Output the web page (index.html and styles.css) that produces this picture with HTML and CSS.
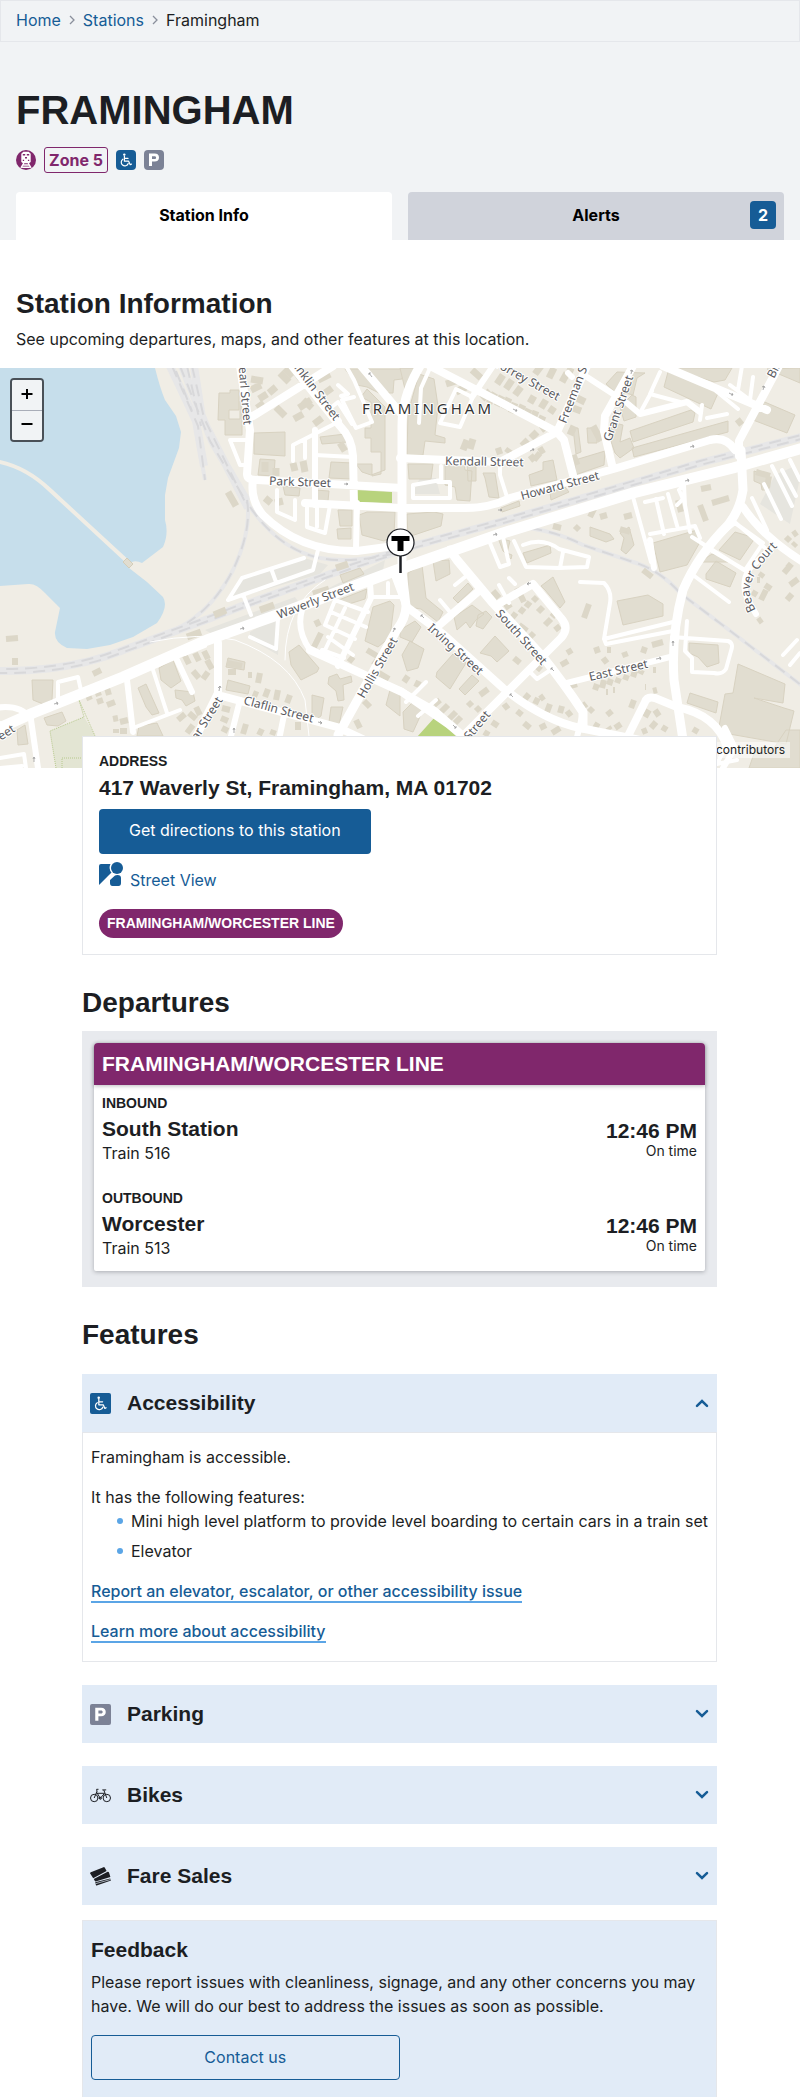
FILE: index.html
```html
<!DOCTYPE html>
<html lang="en">
<head>
<meta charset="utf-8">
<meta name="viewport" content="width=device-width, initial-scale=1">
<title>Framingham | Station</title>
<link rel="stylesheet" href="styles.css">
</head>
<body>
<svg class="sprite" width="0" height="0" aria-hidden="true">
  <symbol id="wheelchair" viewBox="0 0 20 20">
    <g fill="none" stroke="#fff" stroke-width="1.2" stroke-linecap="round" stroke-linejoin="round">
      <path d="M8.4 6v5.2h4.2l1.6 3.5 1.2-.6M8.4 8.4h3.6"/>
      <path d="M6.900 9.200a3.600 3.600 0 1 0 5.300 4.300"/>
    </g>
    <circle cx="8.300" cy="4.600" r="1.200" fill="#fff"/>
  </symbol>
  <symbol id="parking" viewBox="0 0 20 20">
    <path fill="#fff" fill-rule="evenodd" d="M5 3.6h5.6c2.9 0 4.4 1.6 4.4 4s-1.500 4-4.400 4H8V16H5zM8 6.200v2.900h2.400c1.200 0 1.700-.6 1.700-1.450s-.5-1.450-1.700-1.450z"/>
  </symbol>
  <symbol id="chevron" viewBox="0 0 14 10">
    <path d="M2 2.200l5 4.800 5-4.800" fill="none" stroke="#165c96" stroke-width="2.500" stroke-linecap="round"/>
  </symbol>
</svg>

<nav class="breadcrumb" aria-label="Breadcrumb">
  <a href="#">Home</a>
  <svg class="crumb-sep" viewBox="0 0 6 10" aria-hidden="true"><path d="M1 1l4 4-4 4"/></svg>
  <a href="#">Stations</a>
  <svg class="crumb-sep" viewBox="0 0 6 10" aria-hidden="true"><path d="M1 1l4 4-4 4"/></svg>
  <span>Framingham</span>
</nav>

<header class="station-header">
  <h1>FRAMINGHAM</h1>
  <div class="station-tags">
    <svg class="tag-icon" viewBox="0 0 20 20" role="img" aria-label="Commuter Rail">
      <circle cx="10" cy="10" r="10" fill="#80276c"/>
      <path fill="#fff" d="M7.300 1.800h5.400l2 2V12L13 13.300H7L5.300 12V3.800z"/>
      <path fill="#80276c" d="M6.800 4h2.400v1.600H6.800zM10.800 4h2.400v1.600h-2.400zM9 7h2v1.500H9zM6.800 9.800h1.300v1.300H6.800zM11.900 9.800h1.300v1.300h-1.300z"/>
      <path fill="none" stroke="#fff" stroke-width="1.400" d="M7.800 13l-2.800 4.800M12.200 13l2.800 4.800M7 15h6M6.200 17.300h7.600"/>
    </svg>
    <span class="zone">Zone 5</span>
    <svg class="tag-icon tag-access" role="img" aria-label="Accessible"><use href="#wheelchair"/></svg>
    <svg class="tag-icon tag-parking" role="img" aria-label="Parking"><use href="#parking"/></svg>
  </div>
  <div class="tabs">
    <a class="tab tab-active" href="#">Station Info</a>
    <a class="tab" href="#">Alerts <span class="count">2</span></a>
  </div>
</header>

<main>
  <section class="intro">
    <h2>Station Information</h2>
    <p>See upcoming departures, maps, and other features at this location.</p>
  </section>

  <div class="map">
    <svg class="map-canvas" viewBox="0 368 800 400" preserveAspectRatio="xMidYMid slice" role="img" aria-label="Map of the streets around Framingham station">
      <defs>
        <g id="houses">
          <path stroke-width="7" d="M251 379l12 2M251 390l10-5M259 399l8-5M269 393l7-6M280 373l9 9M285 368l8 8M295 371l6 8M276 407l9 9M257 408l7-5M294 419l9-5M303 400l9 8M325 393l7-5M318 380l12-6M322 418l-8 6M299 408l12-8M446 384l10-3M456 392l10-5M472 370l9 8M482 399l8-8M489 403l6-10M497 406l5-10M504 409l5-11M511 413l4-10M518 415l5-10M525 418l4-9M532 421l4-10M539 425l4-9M497 384l6-9M506 389l6-9M515 395l6-8M530 403l4-7M541 408l5-8M550 413l4-6M535 374l6-8M549 378l5-10M562 382l5-9M577 398l8 4M573 408l8 3M568 376l3-8M570 435l4-9M573 455l4 10M463 450l4-10M470 449l3-10M496 452l6-2M507 453l3-4M522 446l6-6M531 438l6-6M541 430l4-3M530 460l5-4M539 452l5-3M593 426l8 15M737 424l5-4M265 462v10M276 468v8M293 463l2 8M303 461l2 11M228 492l8 14M340 443l5 8M265 498l6 5M275 503l8-2M313 594l16-5M214 615l12-5M260 610l14-5M187 637l14-5M336 568l12-4"/>
          <path stroke-width="6" d="M93 674l8-4M87 693l3 7M97 690l2 6M107 688l2 7M97 702l6-2M107 705l8-3M113 719l5-1M120 722l8-2M116 733v-4M120 731h7M185 656l4 8M195 653l4 8M204 651l4 8M207 660l5 9M193 671l6 7M203 679l5-7M178 720l7-6M187 733l6-8M189 713l7 6M200 715l-4-8M227 663l15 3M228 672h8M248 675h4M258 683l2-10M253 693l5 2M265 697l3-8M276 700l2-10M287 703l3-8M222 708l8 2M221 718l7 3M222 728l6 3M246 724l-3 10M262 729l-3 6M274 730l-2 5M298 722v8M316 620l3 6M314 647l7-14M364 701l6 6M356 720l4 8M349 662l4-5M367 650l10 6M373 661l8 6M379 673l10 6M493 591l6 7M505 608l6-4M517 588l7 14M512 618l4-5M520 613l4-5M526 607l4-5M533 601l4-4M538 612l5-5M519 625l8 6M530 637l4-4M514 658l6 5M535 665l6 5M545 625l6-6M552 617l5-6M555 630l5-4M561 665l7-4M567 653l5-3M596 647l2 6M603 658l4 5M607 650h4M624 652l2 5M643 653l2-6M652 645l11-3M595 690l2-6M602 688l2-8M609 685l2-6M617 683l2-5M625 680l2-5M633 677l2-6M640 674l2-4M653 670h3M645 687h1M606 692h2M613 690h2M653 691l4-1M570 686l7-2M524 700l5-6M535 704l3-6M550 704l-3 8M560 713l2-7M571 716l-4-5M582 703l4 5M589 712l4-4M607 715l5-4M615 728l6-4M608 727l2 3M594 724l5 3M631 708l3-8M655 710l4 6M645 717l4-7M651 728l5-6M662 727l5 3M642 732l5-2M694 733l3-5M540 699l4-3M517 711l5 4M524 723l6 5M540 728l6-3M552 733l8-5M492 722l6 4M504 704l4 5M484 732l5 3M448 720l8-8M455 723l6-6M434 705l6-5M441 712l7-7M468 702l4 4M476 707l4 4M480 695l8-6M404 682l4-6M416 687l3-6M590 517l4-8M600 517l7-2M553 526l8 2M575 530l4-4M624 517l8-2M620 529l10 3M701 489l10-2M712 503l17-5M700 505l6 16M678 500l3 12M761 600l5-10M760 577l3-4M765 585l6 4M752 592l5 3M784 573l5-6M787 600l5-6M757 580h3M758 622l4-3M790 585l8-6M787 564l5 4M786 541l4-4M793 546l3-3M793 535l4-3M643 570l9 7M584 618l5-14M770 476l-14-4M767 488l2-12M534 460l6-7M15 658v7M6 639l12-1"/>
        </g>
        <g id="blocks">
          <path d="M219 393h11v-3h9v20h-10v9h11v-18h2v34h-17v-15h-7zM254 433l31-1v24l-31-2zM260 459l15 1-1 16-16-1zM331 462l22 1-1 16-23-1zM320 437l25-3 3 8-26 2zM356 464h16v12l9-2v-22h-10v-14h-6v-10h6v-26l-10-5 6-8 18 18v63l-14 5-9-3zM357 385l-12-16h60l-3 10-8 1-1 13h-14l-12-6zM315 490l14 1-1 10-11-1zM283 486l17 2-1 8-14-1zM338 510h14v16h-12zM337 529l14-1v11h-13zM359 515l8-3h28l-1 23-10 6-22-6zM373 607l17-6 4 4-4 32-12 10-13-6zM289 652l10-7 20 23-2 4-16 8-10-15zM312 695l12 3-3 18-9 6zM331 707h12l-4 18-10-3zM340 575l20-7 4 6-21 9zM336 601l31-12-2 10-16 5zM32 680h21l-1 20-9 4-10-4zM44 718l18-6 4 9-8 5-11-1zM17 730l8-5 3 19-10 1zM228 658l17 4-1 8-18-3zM228 680l22 6-2 8-22-4zM159 668l14-8 8 21-10 7-10-8zM138 688l8-4 13 29-7 2-6-8zM175 690l18 2 2 9-9 5-4-6-6-2zM139 726l18-3 6 13h-26zM329 677l8-3 3 5 11-3 1 6-9 3 1 15-6 1-2-10-8-7zM390 690h10v26l-14-11z"/>
          <path d="M400 368h22l-14 28v6zM419 374l15 5 4 27-3 29 10 3v5l-20-2-2 14h-16l1-42zM408 464h25l-2 15h-22zM445 462h19l1 8 7 1-2 30-13-1-2-13-10-2zM467 461h9v20h-8zM483 473h12l4 25-10-1-4-19zM529 475l14-5v-8l10-2 4 20-26 6zM550 493l15-6 4 5-18 8zM501 508l18-7 1 5-18 6zM407 514l27-2 9 2-2 12-33 11zM575 460l30-9-1 14-29 10zM573 428h5l3 24-5 2zM587 428h10v15h-9zM607 430l12-6 4 1-3 17 10-4 4 10-14 10-5-5zM608 406l7-14-9-8 11-12 28 1-8 5-4 17-8-2zM620 407l12-12 4 2v20l-12 4zM630 431l61-21 4 3-2 9-60 20zM632 448l96-27v11l-94 25zM668 372l51 19-8 18-47-22zM670 368h62l-7 12-11 2zM767 369l33-1v15zM760 400l35 15-8 18-34-13zM653 543l44-13 3 12-13 23-27 7zM620 533l9-6 5 18-8 9-5-4 3-12zM590 527l20 7 4 5-8 3-16-6zM523 553l27-8 1 8-24 10zM498 538l12 3-3 12 5 2-1 4-8-8zM735 532l20 6-15 22-21-10zM754 471l14 5v14h-6l-1-6-7-3zM408 573l14-8 4 33 17 14-5 10-17-13-13-2zM433 561l16-1 1 14-14 7zM453 598l15-15 5 6-15 14zM454 617l18-12 12 9-8 6-6 8-4-6-9 8zM478 615l8-4 6 6-9 12-7-3zM480 653l15-17 14 15-12 11-6-6zM437 672l16-18 13 9-16 26-14-12zM459 689l13-14 7 6-14 14zM400 630l15-9 6 6-9 15-12-5zM402 655l8-14 14 8-6 19-11 3zM617 601l31-6 15 9v12l-40 9zM541 586l12-9 12 25-5 6-15-18zM689 643l29 2 1 18-12 4-9-10-9-4zM690 693l28 9-2 11-29-10zM738 664l47 20-2 19-29-5 30 10 10 3-8 33-68-12 7-38 8-1zM706 574l10-13 20 12-6 14-24-8zM700 562l28 0-4-5-12-3zM403 712l12-12 8 10-10 22-9-3zM786 730h14v38h-51l7-20h18z"/>
        </g>
        <path id="beaver" d="M756 610Q747 594 751 583Q757 566 784 540"/>
      </defs>

      <rect x="-400" y="168" width="1600" height="800" fill="#f0ede5"/>
      <path fill="#c6deeb" d="M0 368H155Q160 388 165 400L176 416 181 432 179 448 168 478 165 495V520Q169 534 163 547L142 563Q136 560 132 562L129 568 147 582 163 597Q169 607 157 623L133 637 110 645 87 649 67 648Q54 642 55 632L60 608 45 593Q36 583 28 584L0 586z"/>
      <path d="M-5 461Q25 466 50 490L128 562" fill="none" stroke="#f0ede5" stroke-width="4"/>
      <path d="M123 562l4-4 6 6-4 4z" fill="#e1ddd0" stroke="#d3cdb9"/>
      <path fill="#e3e5d3" d="M50 731l34-14 11 18v33H56z"/>
      <path d="M56 768L50 731l34-14-5-17 16 36M62 768v-10h22" fill="none" stroke="#b6c98c" stroke-dasharray="1 1"/>
      <path fill="#b8d37d" d="M356 490l36 2v11l-36-1zM435 717l22 20h-40z"/>
      <path fill="#e6e5df" d="M228 598l14-20 62-20 24 7-8 9-88 25zM205 630l90-33 6 8-83 32zM250 632l30-17-2 40-28-16zM325 590l60-30-3 15-50 18zM420 478h16l4 16h-28zM775 475l20-9 5 12-10 46-30-20z"/>

      <g fill="none" stroke="#e7e7e8" stroke-width="8">
        <path d="M170 366l26 55 8 45M182 366l30 75 35 60M194 366l8 52 46 90"/>
        <path d="M-5 671Q60 672 110 655L200 622 250 603 350 567 417 545 500 522 600 493 700 463 805 436"/>
      </g>
      <g fill="none" stroke="#e7e7e8" stroke-width="4">
        <path d="M196 430l9 50M247 500Q252 530 233 570Q215 605 187 623Q160 640 140 645M250 507Q280 550 320 558Q350 564 397 553M530 528Q560 533 583 545L633 562Q660 570 680 593L733 633 805 688"/>
      </g>
      <g fill="none" stroke="#d8d8da" stroke-width="2" stroke-dasharray="12 7">
        <path d="M172 366l26 60 7 54M180 366l30 75 37 62M192 366l12 52 43 88M187 366l14 60M176 371l16 40"/>
        <path d="M-5 673Q60 674 110 657L200 624 250 605 350 569 417 547 500 524 600 495 700 465 805 438"/>
        <path stroke-dashoffset="8" d="M-5 669Q60 670 110 653L200 620 250 601 350 565 417 543 500 520 600 491 700 461 805 434"/>
        <path d="M247 500Q252 530 233 570Q215 605 187 623M250 507Q280 550 320 558Q350 564 397 553M530 528Q560 533 583 545L633 562Q660 570 680 593L733 633 805 688"/>
      </g>

      <use href="#blocks" fill="#e1ddd0" stroke="#d8d2c1"/>
      <use href="#houses" fill="none" stroke="#dcd7c8"/>
      <g class="map-roads">
        <g class="minor">
          <path stroke-width="1" d="M150 642Q200 632 235 640 290 660 305 700L309 736M325 580Q285 605 285 660"/>
          <path stroke-width="4" d="M247 440h-17l10 25h8M293 461v-16l47-24-13-18M305 440v18M315 455l38 2M338 385l10 9-7 2M346 366l8 14 18 42-16 6-14-28 12-3M328 410l10-8 14 22M277 490v22l18 8V500M307 505v22l18 6 5-28M317 507v20M228 600l14-22 62-20M228 600l85-30 5-20M272 571l4 11M244 597l7 18M58 700V682l20-5 4 18M153 670l14 43M180 710l-47 18M0 723l10 5M0 758l24-4 2 14M0 768l22-2M250 637l26 12 2-30M335 600l33 12M335 600l-10 25 30 14M331 612l35 15M328 637l25 18M322 650l22 8M345 608l-20 42M388 595v-12M400 597l-30 0M430 368l-9 20-2 35M472 397l-16-8-16 34 20 4 12-28M441 466v14l-28 5v13h37v-16h-12M500 465v10l7 22M490 543l10 24 9-3-6-27M514 541l12 26 34 1 3-16M523 545q20-8 36 4l30 8-2 10-30 1M633 497l18 65M645 502l18-4M656 499l8 35M668 494l10 35M679 490l4 9-6 6M679 490l5-5 1 20 5 27M650 534l45-8 5 12M580 582l24 1q8 8 6 20l-6 36 69-17M604 639l2 5 67-13M672 637l56 4q6 2 3 10l-5 18q-4 6-12 4l-22-1v-14l-7-7 2-30M693 575l36 27M692 537l52 33M705 547l30-24 28 20-18 27-38-22M730 518l35 30M752 498l15 32M764 484l17 35M772 466l20 40M782 470l14 26M790 460l10 20M660 372l-10 22 30 8M640 413l12-22M707 418l20-4M700 420l2-15M730 385l20 15 3-23M742 366l-4 24M716 391l22 18M406 702l20-20M418 716l18-16M455 585l10-8M440 600l10 12M499 585l10 18M509 578l6 6M783 655l14-15M790 665l10-12M528 670l9 9 12-8M725 748l-8 16 20-4M205 646l-20 8"/>
        </g>
        <g class="major">
          <path stroke-width="6" d="M315 430v75M357 503l-1 47M302 610q-6 20 8 40M370 583l1 15-33 68M127 680l6 52M177 660l15 32M240 700l-9 36M284 715l-4 20M30 713l8 55M-5 708q25-4 35 10M493 366l-21 31M572 377l-4-4M587 377l40 26 13 11 47-12 13 10M650 540l4 28M774 545l-24 23q-10 15-2 32l8 14M725 728l10 20-12 20M567 683l103-26M577 737l6-24M400 690l35 20 25 22"/>
          <path stroke-width="8" d="M333 366l-80 50M305 503l95 5M387 547l-30 4Q300 552 263 515 250 500 253 480M240 366l10 64-3 44q0 6 10 6l145 8M292 366l48 60q12 12 13 30l1 48M218 643v50l-22 44M218 695l119 32 30 14M310 650l92 42 46 32 20 16M361 366l42 50M430 366l70 36 57 30-57 30-53 -2-47-2M587 366l-30 66 7 8 9 35M633 366l-28 50-1 15 9 38M400 508h65q25 0 45-10L617 468 710 440q16-4 25 10M663 366l90 38 14 6M779 366l-40 75v15M743 507q20 30 60 55M480 590l-43 37M500 603l33-19 28 34q9 10 0 20L463 736M407 607l-12-32M407 607l36 27 60 54q40 32 77 40l60 12M627 738l18-36q2-6 10-4l22 9q40 8 50 40"/>
          <path stroke-width="9" d="M420 366q-18 30-18 60v145l4 35q0 12-10 25L338 735M450 550l7 10 36 43 50 54q20 25 40 55v16M741 450l2 40q-3 20-15 35-30 30-45 65-12 45-9 90l9 60"/>
          <path stroke-width="11" d="M-5 730l38-17 90-36 84-37 70-25 120-45 106-37 130-40 100-25 70-20"/>
        </g>
      </g>

      <g fill="none" stroke="#999" stroke-width=".8">
        <path id="oneway" d="M54 704l4-1m-2-1l2 1-1 2M240 629l4-1m-2-1l2 1-1 2M493 535l4-1m-2-1l2 1-1 2M685 481l4-1m-2-1l2 1-1 2M690 447l4-1m-2-1l2 1-1 2M498 510h4m-2-1l2 1-2 1M344 484h4m-2-1l2 1-2 1M513 409l4 2m-1-2l1 2h-2M530 451l4-2m-2 0h2l-1 2M729 393l4 2m-1-2l1 2h-2M763 390l1-4m-2 1l2-1 1 2M631 374l1-4m-2 1l2-1 1 2M656 659l5-1m-2-1l2 1-1 2M673 646v-5m-1 2l1-2 1 2M527 584l4-1m-2-1l-2 2 2 1M424 618l-3-3m0 2v-2h2M554 671l-3-3m0 2v-2h2M513 697l-3-3m0 2v-2h2M453 725l3 3m0-2v2h-2M219 691l1-5m-2 2l2-2 1 2M234 733v-5m-1 2l1-2 1 2M318 722l4 1m-2-2l2 2-2 1M34 762v-5m-1 2l1-2 1 2M393 632l2-4m-2 1l2-1v2M372 377l-3-4m0 2v-2h2"/>
      </g>

      <g class="map-labels">
        <text transform="translate(238 360) rotate(85)">Pearl Street</text>
        <text transform="translate(285 356) rotate(53)">Franklin Street</text>
        <text transform="translate(269 485) rotate(2)">Park Street</text>
        <text transform="translate(445 465) rotate(1)">Kendall Street</text>
        <text transform="translate(522 500) rotate(-15)">Howard Street</text>
        <text transform="translate(494 366) rotate(29)">Torrey Street</text>
        <text transform="translate(566 424) rotate(-69)">Freeman Street</text>
        <text transform="translate(611 442) rotate(-71)">Grant Street</text>
        <text transform="translate(774 379) rotate(-63)">Bishop Street</text>
        <text transform="translate(279 619) rotate(-21)">Waverly Street</text>
        <text transform="translate(364 699) rotate(-60)">Hollis Street</text>
        <text transform="translate(243 704) rotate(15)">Claflin Street</text>
        <text transform="translate(223 700) rotate(-58)" text-anchor="end">Cedar Street</text>
        <text transform="translate(16 731) rotate(-33)" text-anchor="end">Street</text>
        <text transform="translate(427 629) rotate(42)">Irving Street</text>
        <text transform="translate(495 614) rotate(48)">South Street</text>
        <text transform="translate(590 681) rotate(-13)">East Street</text>
        <text transform="translate(491 715) rotate(-50)" text-anchor="end">Street</text>
        <text><textPath href="#beaver">Beaver Court</textPath></text>
        <text class="place" x="362" y="414">FRAMINGHAM</text>
      </g>

      <path d="M400.500 556v17" stroke="#1c1e23" stroke-width="2.500"/>
      <circle cx="400.500" cy="542.500" r="13.500" fill="#fff" stroke="#1c1e23" stroke-width="1.200"/>
      <path d="M391.500 536h18v5h-6v10h-6v-10h-6z" fill="#000"/>
    </svg>
    <div class="zoom">
      <button type="button" aria-label="Zoom in"><svg viewBox="0 0 12 12"><path d="M6 1v10M0.500 6h11"/></svg></button>
      <button type="button" aria-label="Zoom out"><svg viewBox="0 0 12 12"><path d="M0.500 6h11"/></svg></button>
    </div>
    <span class="attribution">contributors</span>
  </div>

  <div class="column">
    <section class="address-card">
      <h3 class="eyebrow">ADDRESS</h3>
      <p class="address">417 Waverly St, Framingham, MA 01702</p>
      <a class="btn btn-primary" href="#">Get directions to this station</a>
      <a class="street-view" href="#"><svg viewBox="0 0 24 24" aria-hidden="true"><path fill="#165c96" d="M2 2h9.500a7.500 7.500 0 0 0 1 8.500L0 23V4a2 2 0 0 1 2-2zM11 18l5-4.500a5 5 0 0 1 2.500-.5q3.500 0 3.500 3v5q0 3-2.500 3h-6Q11 24 11 21z"/><circle cx="18" cy="6" r="6" fill="#165c96"/></svg>Street View</a>
      <a class="pill" href="#">FRAMINGHAM/WORCESTER LINE</a>
    </section>

    <section>
      <h2>Departures</h2>
      <div class="departures">
        <div class="line-card">
          <h3 class="line-name">FRAMINGHAM/WORCESTER LINE</h3>
          <div class="directions">
            <div>
              <h4 class="eyebrow">INBOUND</h4>
              <div class="trip">
                <div><div class="headline">South Station</div><div>Train 516</div></div>
                <div class="when"><div class="headline">12:46 PM</div><div class="status">On time</div></div>
              </div>
            </div>
            <div>
              <h4 class="eyebrow">OUTBOUND</h4>
              <div class="trip">
                <div><div class="headline">Worcester</div><div>Train 513</div></div>
                <div class="when"><div class="headline">12:46 PM</div><div class="status">On time</div></div>
              </div>
            </div>
          </div>
        </div>
      </div>
    </section>

    <section>
      <h2>Features</h2>
      <div class="features">
        <div class="panel">
          <button class="panel-head" type="button" aria-expanded="true">
            <svg class="panel-icon icon-access" aria-hidden="true"><use href="#wheelchair"/></svg>
            <span class="headline">Accessibility</span>
            <svg class="chevron chevron-up" aria-hidden="true"><use href="#chevron"/></svg>
          </button>
          <div class="panel-body">
            <p>Framingham is accessible.</p>
            <div>
              <p>It has the following features:</p>
              <ul>
                <li>Mini high level platform to provide level boarding to certain cars in a train set</li>
                <li>Elevator</li>
              </ul>
            </div>
            <p><a class="text-link" href="#">Report an elevator, escalator, or other accessibility issue</a></p>
            <p><a class="text-link" href="#">Learn more about accessibility</a></p>
          </div>
        </div>
        <button class="panel-head" type="button" aria-expanded="false">
          <svg class="panel-icon icon-parking" aria-hidden="true"><use href="#parking"/></svg>
          <span class="headline">Parking</span>
          <svg class="chevron" aria-hidden="true"><use href="#chevron"/></svg>
        </button>
        <button class="panel-head" type="button" aria-expanded="false">
          <svg class="panel-icon" viewBox="0 0 21 21" aria-hidden="true"><g fill="none" stroke="#1c1e23" stroke-width="1"><circle cx="4.200" cy="13" r="3.700"/><circle cx="16.800" cy="13" r="3.700"/><path d="M4.200 13L7 6.200M6.300 8.300h8.200L10.300 13.300 6.800 7.500M8.500 4.300H6.600L7 6.500M16.800 13L13.800 5M12.300 4.900h3.900M10.300 13.300L8.500 13"/><circle cx="10.400" cy="13.300" r="1"/></g></svg>
          <span class="headline">Bikes</span>
          <svg class="chevron" aria-hidden="true"><use href="#chevron"/></svg>
        </button>
        <button class="panel-head" type="button" aria-expanded="false">
          <svg class="panel-icon" viewBox="0 0 21 21" aria-hidden="true"><path fill="#1c1e23" d="M0 7.300Q0 6.500 .8 6.200L13.500 1.200q.8-.3 1.200.4l1.900 3.500L3.200 12.200zM3.800 13l13.800-7.200q1.200-.2 1.500.9l1.300 4.400L5.700 15.400q-.7 0-1-.6zM5.200 16.200L20.200 12.500l.8 2.100L6.700 19.600q-.5.100-.8-.5z"/><path d="M5.500 17.700l15-4.200" stroke="#e1ebf7" stroke-width=".7"/></svg>
          <span class="headline">Fare Sales</span>
          <svg class="chevron" aria-hidden="true"><use href="#chevron"/></svg>
        </button>
      </div>
    </section>

    <section class="feedback">
      <h3 class="headline">Feedback</h3>
      <p>Please report issues with cleanliness, signage, and any other concerns you may have. We will do our best to address the issues as soon as possible.</p>
      <a class="btn btn-outline" href="#">Contact us</a>
    </section>
  </div>
</main>
</body>
</html>
```

FILE: styles.css
```css
* { box-sizing: border-box; }

body {
  margin: 0;
  background: #fff;
  color: #1c1e23;
  font: 16px/24px Inter, "Liberation Sans", sans-serif;
}

h1, h2, h3, h4, p, ul { margin: 0; padding: 0; }

h1, h2, h3, h4, .headline, .address, .pill {
  font-family: "Liberation Sans", Arial, sans-serif;
  font-weight: 700;
}

h1 { font-size: 40px; line-height: 48px; }
h2 { font-size: 28px; line-height: 36px; }

a { color: #165c96; text-decoration: none; }
button { font: inherit; color: inherit; cursor: pointer; }

.sprite { display: block; position: absolute; }

.headline, .address { font-size: 21px; line-height: 24px; }
.eyebrow { font-size: 14px; line-height: 16px; }

/* Header */
.breadcrumb {
  display: flex;
  align-items: center;
  padding: 7px 15px 9px;
  border: 1px solid #e5e7eb;
  background: #f1f3f5;
}
.crumb-sep {
  width: 6px;
  height: 10px;
  margin: 0 8px;
  fill: none;
  stroke: #8a8f9c;
  stroke-width: 1.3;
}

.station-header { padding: 44px 16px 0; background: #f1f3f5; }

.station-tags {
  display: flex;
  align-items: center;
  gap: 8px;
  margin: 13px 0 19px;
}
.tag-icon { width: 20px; height: 20px; }
.tag-access, .tag-parking { border-radius: 4px; }
.tag-access, .icon-access { background: #165c96; }
.tag-parking, .icon-parking { background: #7c8296; }
.zone {
  padding: 0 4px;
  border: 1px solid #80276c;
  border-radius: 3px;
  color: #80276c;
  font-weight: 700;
}

.tabs { display: grid; grid-template-columns: 1fr 1fr; gap: 16px; }
.tab {
  position: relative;
  padding: 11px 8px 13px;
  border-radius: 4px 4px 0 0;
  background: #d0d3db;
  color: #000;
  font-weight: 700;
  text-align: center;
}
.tab-active { background: #fff; }
.count {
  position: absolute;
  top: 9px;
  right: 8px;
  width: 26px;
  line-height: 28px;
  border-radius: 4px;
  background: #165c96;
  color: #fff;
}

.intro { padding: 46px 16px 17px; }
.intro p { margin-top: 5px; }

/* Map */
.map { position: relative; height: 400px; overflow: hidden; }
.map-canvas { display: block; width: 100%; height: 100%; }
.map-roads { fill: none; stroke: #fff; stroke-linecap: round; stroke-linejoin: round; }
.map-labels {
  font: 12px "Noto Sans", sans-serif;
  fill: #5a5a5e;
  stroke: #fff;
  stroke-width: 2px;
  stroke-linejoin: round;
  paint-order: stroke;
}
.place { font-size: 15px; letter-spacing: 3px; fill: #333; }

.zoom {
  position: absolute;
  top: 10px;
  left: 10px;
  width: 34px;
  border: 2px solid #495057;
  border-radius: 4px;
  overflow: hidden;
}
.zoom button {
  display: flex;
  align-items: center;
  justify-content: center;
  width: 100%;
  height: 30px;
  padding: 0 0 3px;
  border: 0;
  background: #f1f3f5;
}
.zoom button + button { border-top: 1px solid #a9adb8; }
.zoom svg { width: 12px; height: 12px; stroke: #000; stroke-width: 2; }

.attribution {
  position: absolute;
  right: 10px;
  bottom: 10px;
  padding: 0 5px;
  background: rgba(255, 255, 255, .5);
  font-size: 12px;
  line-height: 16px;
}

/* Content column */
.column { position: relative; margin: -32px 83px 0 82px; }
.column section + section > h2 { margin-top: 30px; }

.address-card {
  display: flex;
  flex-direction: column;
  align-items: flex-start;
  padding: 16px;
  border: 1px solid #e5e7eb;
  background: #fff;
}
.address { margin: 7px 0 9px; }

.btn { border-radius: 4px; }
.btn-primary { padding: 9px 30px 12px; background: #165c96; color: #fff; }
.street-view { margin-top: 8px; }
.street-view svg { width: 24px; height: 24px; margin-right: 7px; }
.pill {
  margin-top: 17px;
  padding: 0 8px;
  border-radius: 15px;
  background: #80276c;
  color: #fff;
  font-size: 14px;
  line-height: 29px;
}

.departures { margin-top: 10px; padding: 12px 12px 16px; background: #e8eaee; }
.line-card {
  border-radius: 4px 4px 2px 2px;
  background: #fff;
  box-shadow: 0 1px 4px rgba(28, 30, 35, .3);
}
.line-name {
  padding: 8px;
  border-radius: 4px 4px 0 0;
  background: #80276c;
  color: #fff;
  font-size: 21px;
  line-height: 26px;
  box-shadow: 0 1px 4px rgba(28, 30, 35, .3);
}
.directions { display: flex; flex-direction: column; gap: 25px; padding: 10px 8px 11px; }
.trip {
  display: flex;
  align-items: center;
  justify-content: space-between;
  margin-top: 6px;
}
.when { padding-bottom: 4px; text-align: right; }
.status { font-size: 14px; line-height: 16px; }

.features { display: flex; flex-direction: column; gap: 23px; margin-top: 21px; }
.panel-head {
  display: flex;
  align-items: center;
  width: 100%;
  padding: 17px 8px;
  border: 0;
  background: #e1ebf7;
  text-align: left;
}
.panel-icon { width: 21px; height: 21px; margin-right: 16px; border-radius: 2px; }
.chevron { width: 14px; height: 10px; margin-left: auto; }
.chevron-up { transform: rotate(180deg); }
.panel-body {
  display: flex;
  flex-direction: column;
  gap: 16px;
  padding: 12px 0 18px 8px;
  border: 1px solid #e5e7eb;
}
.panel-body ul { padding-left: 26px; list-style: none; }
.panel-body li { display: flex; align-items: center; gap: 8px; }
.panel-body li + li { margin-top: 6px; }
.panel-body li::before {
  content: "";
  flex: none;
  width: 6px;
  height: 6px;
  border-radius: 50%;
  background: #5ba5e6;
}
.text-link { border-bottom: 2px solid #5ba5e6; font-weight: 500; }

.feedback {
  display: flex;
  flex-direction: column;
  margin-top: 15px;
  padding: 17px 8px;
  border: 1px solid #e5e7eb;
  border-bottom: 0;
  background: #e1ebf7;
}
.feedback p { margin: 8px 0 17px; }
.btn-outline {
  width: 50%;
  padding: 9px 16px 10px;
  border: 1px solid #165c96;
  text-align: center;
}
```
